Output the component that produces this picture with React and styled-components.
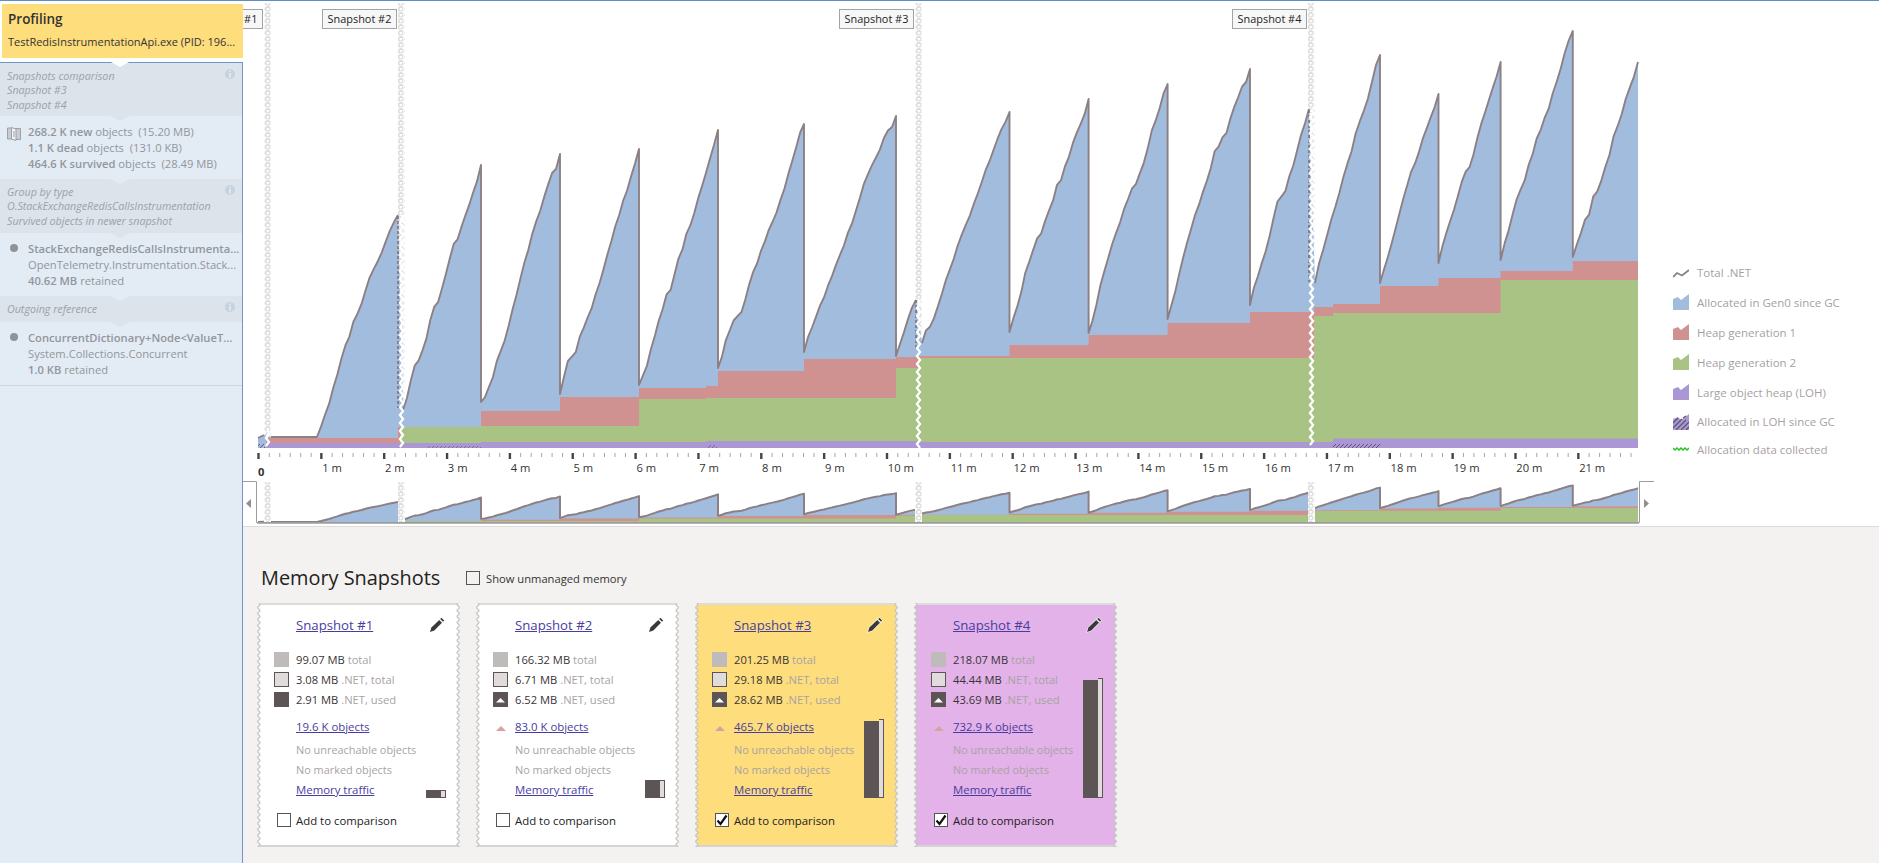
import React from 'react';
import styled, { createGlobalStyle } from 'styled-components';

const FONT = '"Open Sans", "Noto Sans", "Liberation Sans", sans-serif';

const Global = createGlobalStyle`
  html, body { margin: 0; padding: 0; background: #fff; }
  body { font-family: ${FONT}; overflow: hidden; }
  * { box-sizing: border-box; }
`;

/* ---------- chart data ---------- */
const BASE = 448;
const TEETH = [
  [317, 437, 398, 215], [403, 410, 481, 165], [481, 402, 560, 154], [560, 394, 639, 149],
  [639, 385, 718, 130], [718, 368, 804, 124], [804, 352, 896, 116], [896, 356, 916, 300],
  [922, 343, 1009.5, 112], [1009.5, 332, 1088.6, 99], [1088.6, 333, 1167.6, 84], [1167.6, 319, 1250, 69],
  [1250, 305, 1309, 109], [1315, 283, 1380, 55], [1380, 283, 1438.5, 94], [1438.5, 263, 1500.6, 62],
  [1500.6, 260, 1572.8, 31], [1572.8, 257, 1638, 62],
];
const rnd = (i, s) => {
  const v = Math.sin(i * 12.9898 + s * 78.233) * 43758.5453;
  return v - Math.floor(v);
};
const toothPoints = ([x0, y0, x1, y1], seed) => {
  const n = Math.max(3, Math.round((x1 - x0) / 4));
  const w = [];
  for (let i = 0; i < n; i++) {
    const r = rnd(i, seed);
    w.push((r < 0.07 && seed > 3 ? 0.35 : 0.65 + 0.7 * r) * (1.08 - 0.16 * (i / n)));
  }
  const total = w.reduce((a, b) => a + b, 0);
  const pts = [[x0, y0]];
  let acc = 0;
  for (let i = 0; i < n; i++) {
    acc += w[i];
    pts.push([x0 + ((x1 - x0) * (i + 1)) / n, y0 + ((y1 - y0) * acc) / total]);
  }
  return pts;
};
const TOOTH_PTS = TEETH.map((t, i) => toothPoints(t, i + 3));
const fmt = (p) => `${p[0].toFixed(1)} ${p[1].toFixed(1)}`;
const FILL_PATH = (() => {
  let d = `M258 ${BASE} L258 438 L264 435 L271 437 L317 437`;
  TOOTH_PTS.forEach((pts) => pts.forEach((p) => { d += ` L${fmt(p)}`; }));
  return `${d} L1638 ${BASE} Z`;
})();
const LINE_PATH = (() => {
  let d = 'M258 438 L264 435 M271 437 L317 437';
  let prev = 317;
  TOOTH_PTS.forEach((pts) => {
    pts.forEach((p, i) => {
      d += ` ${i === 0 && p[0] !== prev ? 'M' : 'L'}${fmt(p)}`;
    });
    prev = pts[pts.length - 1][0];
  });
  return d;
})();
const stepPath = (steps, x0) => {
  let d = `M${x0} ${BASE}`;
  let x = x0;
  steps.forEach(([xe, y]) => { d += ` L${x} ${y} L${xe} ${y}`; x = xe; });
  return `${d} L${x} ${BASE} Z`;
};
const RED = stepPath([[398, 438], [481, 427], [560, 411], [639, 397], [706, 388], [718, 386], [804, 371], [896, 359], [918, 357], [1009.5, 356], [1088.6, 345], [1167.6, 335], [1250, 323], [1314, 312], [1333, 307], [1380, 304], [1438.5, 286], [1500.6, 278], [1572.8, 271], [1638, 261]], 266);
const GREEN = stepPath([[400, 443], [481, 427], [639, 426], [706, 399], [896, 398], [918, 368], [1314, 358], [1333, 316], [1500.6, 313], [1638, 280]], 266);
const PURPLE = stepPath([[481, 443], [706, 442], [918, 441], [1333, 442], [1638, 438.5]], 266);
const SNAP_X = [267.5, 401.5, 918.5, 1311.5];
const wave = (x, y0, y1) => {
  let d = `M${x} ${y0}`;
  let s = 1;
  for (let y = y0 + 4; y <= y1; y += 4) { d += ` L${x + s * 1.6} ${y}`; s = -s; }
  return d;
};
const PX_MIN = 62.85;
const X0 = 258.3;

const Chart = () => {
  const ticks = [];
  for (let i = 0; i <= 131; i++) {
    const x = X0 + (i * PX_MIN) / 6;
    const major = i % 6 === 0;
    ticks.push(major
      ? <rect key={i} x={x - 1} y={453} width={2.4} height={6} fill="#4f3f46" />
      : <rect key={i} x={x} y={453} width={1} height={4} fill="#a8a2a2" />);
  }
  const labels = [];
  for (let i = 1; i <= 21; i++) {
    labels.push(<AxisText key={i} x={X0 + i * PX_MIN + 1} y={472}>{`${i} m`}</AxisText>);
  }
  const body = (strokeW, nonScaling) => (
    <>
      <path d={FILL_PATH} fill="#a2bcdd" />
      <path d={RED} fill="#cf9291" />
      <path d={GREEN} fill="#a9c385" />
      <path d={PURPLE} fill="#ab97d3" />
      <path
        d={LINE_PATH}
        fill="none"
        stroke="#8d8084"
        strokeWidth={strokeW}
        strokeLinejoin="round"
        vectorEffect={nonScaling ? 'non-scaling-stroke' : undefined}
      />
    </>
  );
  return (
    <ChartSvg viewBox="243 0 1412 526" width="1412" height="526">
      <defs>
        <pattern id="chain" width="7" height="6" patternUnits="userSpaceOnUse" patternTransform="translate(264 3)">
          <rect width="7" height="6" fill="#fff" />
          <path d="M0.8 0 L3.2 2.2 M3.8 3 L1 6 M6.2 0.5 L4.4 2.2 M3.8 3.2 L6.4 5.6" stroke="#dedede" strokeWidth="1.7" fill="none" />
        </pattern>
        <pattern id="hatch" width="4" height="4" patternUnits="userSpaceOnUse">
          <path d="M0 4 L4 0" stroke="#5f5474" strokeWidth="1" />
        </pattern>
        <pattern id="chainMini" width="7" height="6" patternUnits="userSpaceOnUse" patternTransform="translate(264 482)">
          <rect width="7" height="6" fill="#fff" />
          <path d="M0.8 0 L3.2 2.2 M3.8 3 L1 6 M6.2 0.5 L4.4 2.2 M3.8 3.2 L6.4 5.6" stroke="#dedede" strokeWidth="1.7" fill="none" />
        </pattern>
      </defs>

      {SNAP_X.map((x) => <rect key={x} x={x - 3.5} y={3} width={7} height={445} fill="url(#chain)" />)}
      {body(1.9, false)}
      <rect x={427} y={446} width={54} height={2} fill="url(#hatch)" opacity="0.6" />
      <rect x={708} y={445} width={9} height={3} fill="url(#hatch)" opacity="0.7" />
      <rect x={1333} y={444} width={47} height={4} fill="url(#hatch)" />
      <rect x={258} y={444} width={7} height={4} fill="url(#hatch)" />
      <path d="M398 216 V408 M916 300 V350 M1309 110 V282" stroke="#7d7074" strokeWidth="1.6" strokeDasharray="3 2" fill="none" />
      {SNAP_X.map((x, i) => (
        <path key={x} d={wave(x, [430, 215, 300, 109][i], BASE)} stroke="#fff" strokeWidth="2.2" fill="none" />
      ))}

      {ticks}
      {labels}
      <AxisText x={258} y={476} $bold>0</AxisText>

      <g transform={`translate(0 523) scale(1 0.09) translate(0 ${-BASE})`}>{body(2, true)}</g>
      {SNAP_X.map((x) => <rect key={x} x={x - 3.5} y={482} width={7} height={41} fill="url(#chainMini)" />)}

      <path d="M243 481.5 H256.5 V522.5 H1639.5 V481.5 H1654" fill="none" stroke="#9c9c9c" strokeWidth="1" />
      <path d="M257 523 H1639" stroke="#9c9c9c" strokeWidth="1.4" />
      <path d="M251 499 L246 503.5 L251 508 Z" fill="#8f9090" />
      <path d="M1644 499 L1649 503.5 L1644 508 Z" fill="#8f9090" />
    </ChartSvg>
  );
};

/* ---------- styled parts ---------- */
const Page = styled.div`
  display: flex;
  width: 1879px;
  height: 863px;
  border-top: 1px solid #5f8fc0;
  background: #fff;
  overflow: hidden;
`;
const Sidebar = styled.aside`
  position: relative;
  z-index: 2;
  flex: 0 0 243px;
  min-width: 0;
  width: 243px;
  display: flex;
  flex-direction: column;
  padding-top: 3px;
`;
const RunHeader = styled.div`
  margin-left: 2px;
  height: 54px;
  padding: 4px 6px 0;
  background: #fedd7c;
  color: #333;
`;
const RunTitle = styled.div`
  font-size: 13.5px;
  line-height: 22px;
  font-weight: 600;
`;
const RunProcess = styled.div`
  margin-top: 2px;
  font-size: 11px;
  line-height: 20px;
  white-space: nowrap;
`;
const Trail = styled.div`
  position: relative;
  flex: 1;
  margin-top: 4px;
  background: #e3ebf4;
  border-top: 1px solid #6e97c2;
  border-right: 1px solid #6e97c2;
  &::before {
    content: '';
    position: absolute;
    left: 110px;
    top: 0;
    border-left: 10px solid transparent;
    border-right: 10px solid transparent;
    border-top: 5px solid #6e97c2;
  }
  &::after {
    content: '';
    position: absolute;
    left: 111px;
    top: -1px;
    border-left: 9px solid transparent;
    border-right: 9px solid transparent;
    border-top: 5px solid #fff;
  }
`;
const TrailHead = styled.div`
  position: relative;
  height: ${(p) => p.$h}px;
  padding: 6px 7px 0;
  background: #dce3eb;
  color: #9ba2aa;
  font-size: 10.7px;
  font-style: italic;
  line-height: 14.4px;
  white-space: nowrap;
  &::before {
    content: '';
    position: absolute;
    left: 110px;
    top: 0;
    border-left: 10px solid transparent;
    border-right: 10px solid transparent;
    border-top: 5px solid ${(p) => (p.$first ? 'transparent' : '#e3ebf4')};
  }
  &::after {
    content: '';
    position: absolute;
    left: 110px;
    bottom: -5px;
    z-index: 1;
    border-left: 10px solid transparent;
    border-right: 10px solid transparent;
    border-top: 5px solid #dce3eb;
  }
`;
const InfoMark = styled.svg`
  position: absolute;
  right: 7px;
  top: 6px;
`;
const TrailBody = styled.div`
  display: grid;
  grid-template-columns: 28px 1fr;
  height: 63px;
  padding-top: 8px;
  font-size: 11.2px;
  line-height: 16px;
  color: #92969c;
  white-space: nowrap;
  ${(p) => p.$last && 'height: 64px; border-bottom: 1px solid #cdd5de;'}
`;
const TrailIcon = styled.div`
  padding: 3px 0 0 ${(p) => (p.$dot ? 10 : 7)}px;
`;
const Dot = styled.div`
  width: 8px;
  height: 8px;
  border-radius: 50%;
  background: #8f9398;
`;
const Strong = styled.b`
  font-weight: 600;
`;

const Main = styled.main`
  flex: 1;
  display: flex;
  flex-direction: column;
  min-width: 0;
`;
const ChartRow = styled.section`
  position: relative;
  flex: 0 0 525px;
  display: flex;
  border-bottom: 1px solid #dcdcdc;
`;
const ChartSvg = styled.svg`
  display: block;
  flex: 0 0 1412px;
  margin-top: -1px;
`;
const AxisText = styled.text`
  font-family: ${FONT};
  font-size: 11.2px;
  font-weight: ${(p) => (p.$bold ? 700 : 400)};
  fill: #333;
`;
const SnapTag = styled.div`
  position: absolute;
  top: 8px;
  left: ${(p) => p.$x - 243}px;
  width: 75px;
  height: 20px;
  background: #f7f7f7;
  border: 1px solid #a3a3a3;
  color: #222;
  font-size: 10.9px;
  line-height: 18px;
  text-align: center;
  white-space: nowrap;
`;
const Legend = styled.ul`
  list-style: none;
  margin: 0;
  padding: 256px 0 0 18px;
`;
const LegendRow = styled.li`
  display: flex;
  align-items: center;
  gap: 8px;
  height: ${(p) => p.$h || 30}px;
  font-size: 11.5px;
  color: #a79fa5;
  white-space: nowrap;
`;

const Lower = styled.section`
  flex: 1;
  background: #f3f2f1;
  padding: 37px 0 0 14px;
`;
const LowerHead = styled.div`
  display: flex;
  align-items: center;
  height: 28px;
  margin-left: 4px;
`;
const LowerTitle = styled.h2`
  margin: 0 18px 0 0;
  width: 187px;
  font-size: 19.9px;
  line-height: 28px;
  font-weight: 400;
  color: #222;
  white-space: nowrap;
`;
const LowerOption = styled.label`
  display: flex;
  align-items: center;
  gap: 6px;
  font-size: 11.2px;
  color: #333;
  white-space: nowrap;
`;
const Box = styled.span`
  display: flex;
  align-items: center;
  justify-content: center;
  flex: 0 0 14px;
  width: 14px;
  height: 14px;
  background: ${(p) => (p.$on ? '#fff' : 'transparent')};
  border: 1px solid #555;
`;
const CardList = styled.div`
  display: flex;
  gap: 16px;
  margin-top: 11px;
`;
const Card = styled.article`
  position: relative;
  flex: 0 0 203px;
  height: 244px;
  padding-top: 10px;
  background: ${(p) => p.$bg};
  border-top: 2px solid #dcdcdc;
  border-bottom: 2px solid #d4d4d4;
`;
const Edge = styled.svg`
  position: absolute;
  top: -2px;
  ${(p) => (p.$right ? 'right: 0; transform: scaleX(-1);' : 'left: 0;')}
`;
const CardTitle = styled.div`
  display: flex;
  justify-content: space-between;
  align-items: center;
  height: 20px;
  padding: 0 15px 0 39px;
`;
const TitleLink = styled.a`
  font-size: 13.2px;
  color: #483d9f;
  text-decoration: underline;
  white-space: nowrap;
`;
const Stats = styled.div`
  display: flex;
  flex-direction: column;
  gap: 5px;
  margin-top: 17px;
  padding-left: 17px;
`;
const StatRow = styled.div`
  display: flex;
  align-items: center;
  gap: 7px;
  height: 15px;
  font-size: 11.2px;
  line-height: 14px;
  color: #3a3436;
  white-space: nowrap;
`;
const Muted = styled.span`
  color: #a8a3a3;
`;
const Swatch = styled.span`
  display: flex;
  align-items: center;
  justify-content: center;
  flex: 0 0 15px;
  width: 15px;
  height: 15px;
  background: ${(p) => p.$bg};
  border: ${(p) => (p.$border ? '1px solid #5d5456' : 'none')};
`;
const InfoLines = styled.div`
  margin-top: 10px;
  padding-left: 39px;
  font-size: 11.4px;
  line-height: 20px;
  white-space: nowrap;
`;
const ObjectLine = styled.div`
  position: relative;
  height: 23px;
  line-height: 20px;
`;
const Rise = styled.span`
  position: absolute;
  left: -19px;
  top: 9px;
  border-left: 5px solid transparent;
  border-right: 5px solid transparent;
  border-bottom: 5px solid #d6a2a4;
`;
const TextLink = styled.a`
  color: #483d9f;
  text-decoration: underline;
`;
const Note = styled.div`
  height: 20px;
  font-size: 10.9px;
  color: #a8a3a3;
`;
const CompareRow = styled.label`
  display: flex;
  align-items: center;
  gap: 5px;
  height: 20px;
  margin-top: 10px;
  padding-left: 20px;
  font-size: 11.4px;
  color: #222;
  white-space: nowrap;
`;
const Usage = styled.div`
  position: absolute;
  right: 14px;
  bottom: 47px;
  display: flex;
  align-items: flex-end;
  width: 20px;
`;
const UsageUsed = styled.div`
  flex: 0 0 15px;
  height: ${(p) => p.$h}px;
  background: #5d5456;
`;
const UsageTotal = styled.div`
  flex: 0 0 5px;
  height: ${(p) => p.$h}px;
  background: #e1dcdc;
  border: 1px solid #5d5456;
  border-left: none;
`;

/* ---------- small drawings ---------- */
const Info = () => (
  <InfoMark width="10" height="10" viewBox="0 0 10 10">
    <circle cx="5" cy="5" r="5" fill="#c5d2e0" />
    <rect x="4.2" y="1.5" width="1.6" height="1.5" fill="#e8eef5" />
    <rect x="4.2" y="4" width="1.6" height="4.5" fill="#e8eef5" />
  </InfoMark>
);
const PagesIcon = () => (
  <svg width="14" height="14" viewBox="0 0 14 14">
    <path d="M0.5 1 H5 V12 H0.5 Z M8 1.5 H13.5 V12.5 H8 Z" fill="#c9cdd2" stroke="#9ea2a8" />
    <path d="M4.5 0.5 L9 2 V13.5 L4.5 12 Z" fill="#f0f3f6" stroke="#9ea2a8" />
    <path d="M6 5 H8 M6 7 H8 M6 9 H8" stroke="#9ea2a8" />
  </svg>
);
const Pencil = () => (
  <svg width="16" height="16" viewBox="0 0 16 16">
    <g stroke="#fff" strokeWidth="1.2" paintOrder="stroke" strokeLinejoin="round">
      <path d="M1 15 L2.4 10.6 L10.2 2.9 L13 5.7 L5.3 13.5 Z" fill="#3a3a3a" />
      <path d="M11.2 1.9 L12.4 0.8 L15.2 3.6 L14 4.7 Z" fill="#3a3a3a" />
    </g>
  </svg>
);
const UpMark = () => (
  <svg width="9" height="6" viewBox="0 0 9 6"><path d="M0 5.5 L4.5 1 L9 5.5 Z" fill="#fff" /></svg>
);
const Check = () => (
  <svg width="12" height="12" viewBox="0 0 12 12">
    <path d="M1.5 6.5 L4.5 10 L10.5 1.5" fill="none" stroke="#111" strokeWidth="2.2" />
  </svg>
);
const EDGE = (() => {
  let d = 'M1.8 0';
  for (let y = 0; y < 244; y += 6) d += ` Q4.2 ${y + 1.5} 1.8 ${y + 3} Q-0.4 ${y + 4.5} 1.8 ${y + 6}`;
  return d;
})();
const CardEdge = ({ right }) => (
  <Edge $right={right} width="6" height="244" viewBox="0 0 6 244">
    <path d={`${EDGE} L0 246 L0 0 Z`} fill="#f3f2f1" />
    <path d={EDGE} fill="none" stroke="#c4c4c4" strokeWidth="1.3" />
  </Edge>
);
const AreaGlyph = ({ color, hatch }) => (
  <svg width="16" height="16" viewBox="0 0 16 16">
    <path d="M0 16 V5 L5 3 L8 6 L16 0 V16 Z" fill={color} />
    {hatch && <path d="M0 9 L5 4 M0 14 L9 5 M3 16 L13 6 M8 16 L16 8 M13 16 L16 13 M10 4 L13 2" stroke="#5f5474" strokeWidth="1.3" />}
  </svg>
);
const TraceGlyph = () => (
  <svg width="16" height="16" viewBox="0 0 16 16">
    <path d="M0 13 L4 9 L9 11.5 L16 6" fill="none" stroke="#8d8084" strokeWidth="1.8" />
  </svg>
);
const DataGlyph = () => (
  <svg width="16" height="16" viewBox="0 0 16 16">
    <path d="M0 7 L2 9 L4 7 L6 9 L8 7 L10 9 L12 7 L14 9 L16 7" fill="none" stroke="#25c025" strokeWidth="1.5" />
  </svg>
);

/* ---------- content ---------- */
const LEGEND = [
  { text: 'Total .NET', glyph: <TraceGlyph /> },
  { text: 'Allocated in Gen0 since GC', glyph: <AreaGlyph color="#a2bcdd" /> },
  { text: 'Heap generation 1', glyph: <AreaGlyph color="#cf9291" /> },
  { text: 'Heap generation 2', glyph: <AreaGlyph color="#a9c385" /> },
  { text: 'Large object heap (LOH)', glyph: <AreaGlyph color="#ab97d3" /> },
  { text: 'Allocated in LOH since GC', glyph: <AreaGlyph color="#ab97d3" hatch />, h: 29 },
  { text: 'Allocation data collected', glyph: <DataGlyph />, h: 26 },
];
const CARDS = [
  { n: 1, bg: '#fff', total: '99.07', net: '3.08', used: '2.91', objects: '19.6 K objects', up: false, checked: false, usedH: 8, totalH: 8 },
  { n: 2, bg: '#fff', total: '166.32', net: '6.71', used: '6.52', objects: '83.0 K objects', up: true, checked: false, usedH: 18, totalH: 18 },
  { n: 3, bg: '#fedd7c', total: '201.25', net: '29.18', used: '28.62', objects: '465.7 K objects', up: true, checked: true, usedH: 77, totalH: 79 },
  { n: 4, bg: '#e2b2e8', total: '218.07', net: '44.44', used: '43.69', objects: '732.9 K objects', up: true, checked: true, usedH: 118, totalH: 120 },
];
const TAGS = [
  { x: 188, n: 1 }, { x: 322, n: 2 }, { x: 839, n: 3 }, { x: 1232, n: 4 },
];

const Stat = ({ swatch, value, label }) => (
  <StatRow>
    {swatch}
    <span>{value} MB <Muted>{label}</Muted></span>
  </StatRow>
);

const SnapshotCard = ({ c }) => (
  <Card $bg={c.bg}>
    <CardEdge />
    <CardEdge right />
    <CardTitle>
      <TitleLink>{`Snapshot #${c.n}`}</TitleLink>
      <Pencil />
    </CardTitle>
    <Stats>
      <Stat swatch={<Swatch $bg="#c0bbbb" />} value={c.total} label="total" />
      <Stat swatch={<Swatch $bg="#e1dcdc" $border />} value={c.net} label=".NET, total" />
      <Stat swatch={<Swatch $bg="#5d5456">{c.up && <UpMark />}</Swatch>} value={c.used} label=".NET, used" />
    </Stats>
    <InfoLines>
      <ObjectLine>
        {c.up && <Rise />}
        <TextLink>{c.objects}</TextLink>
      </ObjectLine>
      <Note>No unreachable objects</Note>
      <Note>No marked objects</Note>
      <div><TextLink>Memory traffic</TextLink></div>
    </InfoLines>
    <CompareRow>
      <Box $on={c.checked}>{c.checked && <Check />}</Box>
      Add to comparison
    </CompareRow>
    <Usage>
      <UsageUsed $h={c.usedH} />
      <UsageTotal $h={c.totalH} />
    </Usage>
  </Card>
);

export default function App() {
  return (
    <>
      <Global />
      <Page>
        <Sidebar>
          <RunHeader>
            <RunTitle>Profiling</RunTitle>
            <RunProcess>TestRedisInstrumentationApi.exe (PID: 196...</RunProcess>
          </RunHeader>
          <Trail>
            <TrailHead $h={53} $first>
              <Info />
              <div>Snapshots comparison</div>
              <div>Snapshot #3</div>
              <div>Snapshot #4</div>
            </TrailHead>
            <TrailBody>
              <TrailIcon><PagesIcon /></TrailIcon>
              <div>
                <div><Strong>268.2 K new</Strong> objects&nbsp; (15.20 MB)</div>
                <div><Strong>1.1 K dead</Strong> objects&nbsp; (131.0 KB)</div>
                <div><Strong>464.6 K survived</Strong> objects&nbsp; (28.49 MB)</div>
              </div>
            </TrailBody>
            <TrailHead $h={54}>
              <Info />
              <div>Group by type</div>
              <div>O.StackExchangeRedisCallsInstrumentation</div>
              <div>Survived objects in newer snapshot</div>
            </TrailHead>
            <TrailBody>
              <TrailIcon $dot><Dot /></TrailIcon>
              <div>
                <div><Strong>StackExchangeRedisCallsInstrumenta...</Strong></div>
                <div>OpenTelemetry.Instrumentation.Stack...</div>
                <div><Strong>40.62 MB</Strong> retained</div>
              </div>
            </TrailBody>
            <TrailHead $h={26}>
              <Info />
              <div>Outgoing reference</div>
            </TrailHead>
            <TrailBody $last>
              <TrailIcon $dot><Dot /></TrailIcon>
              <div>
                <div><Strong>ConcurrentDictionary+Node&lt;ValueT...</Strong></div>
                <div>System.Collections.Concurrent</div>
                <div><Strong>1.0 KB</Strong> retained</div>
              </div>
            </TrailBody>
          </Trail>
        </Sidebar>
        <Main>
          <ChartRow>
            {TAGS.map((t) => <SnapTag key={t.n} $x={t.x}>{`Snapshot #${t.n}`}</SnapTag>)}
            <Chart />
            <Legend>
              {LEGEND.map((l) => (
                <LegendRow key={l.text} $h={l.h}>{l.glyph}{l.text}</LegendRow>
              ))}
            </Legend>
          </ChartRow>
          <Lower>
            <LowerHead>
              <LowerTitle>Memory Snapshots</LowerTitle>
              <LowerOption><Box />Show unmanaged memory</LowerOption>
            </LowerHead>
            <CardList>
              {CARDS.map((c) => <SnapshotCard key={c.n} c={c} />)}
            </CardList>
          </Lower>
        </Main>
      </Page>
    </>
  );
}
